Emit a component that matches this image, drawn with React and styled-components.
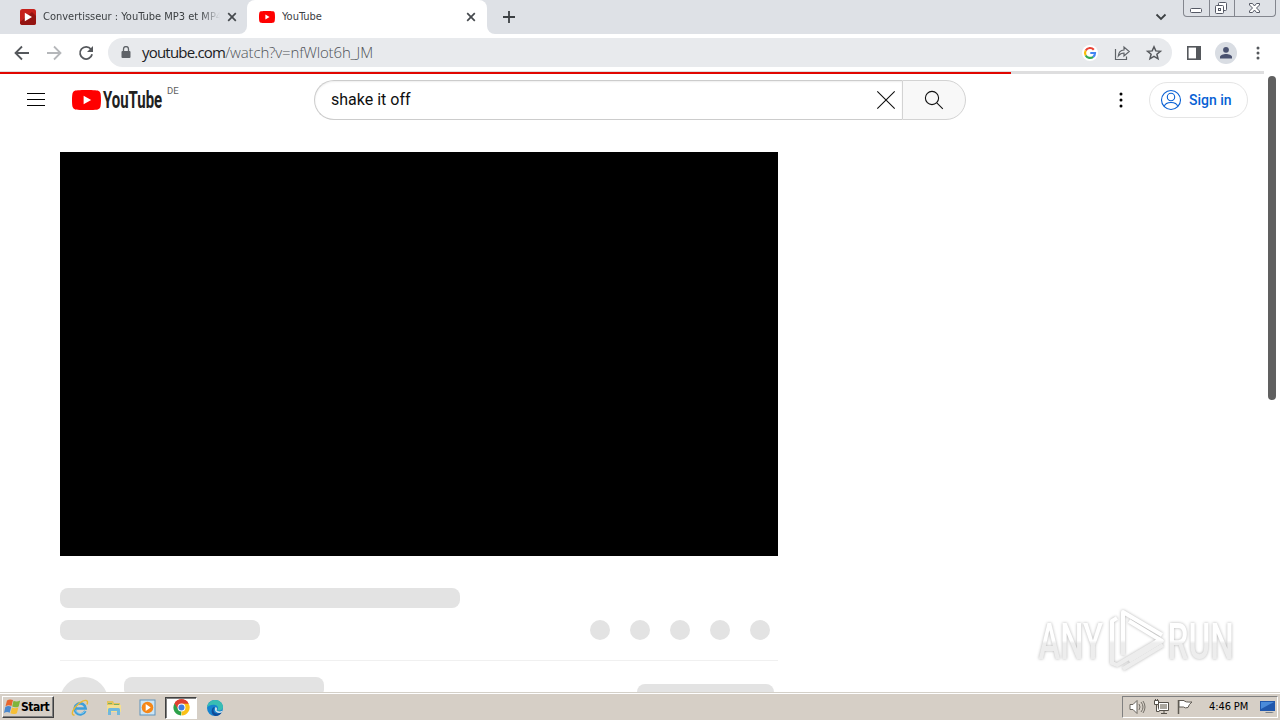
import React from 'react';
import styled, { createGlobalStyle } from 'styled-components';

const GlobalStyle = createGlobalStyle`
  * {
    box-sizing: border-box;
  }

  body {
    margin: 0;
    overflow: hidden;
    background: #fff;
  }

  svg {
    display: block;
    flex: none;
  }
`;

const Screen = styled.div`
  position: relative;
  display: flex;
  flex-direction: column;
  width: 1280px;
  height: 720px;
  overflow: hidden;
  font-family: Roboto, 'Liberation Sans', sans-serif;
`;

/* ---------- browser ---------- */

const TabStrip = styled.div`
  display: flex;
  height: 34px;
  background: #dee1e6;
`;

const Tab = styled.div`
  display: flex;
  align-items: center;
  width: ${({ $width }) => $width}px;
  height: 34px;
  padding: 0 ${({ $active }) => ($active ? 11 : 10)}px 0 ${({ $left }) => $left}px;
  background: ${({ $active }) => ($active ? '#fff' : '#dee1e6')};
  border-radius: ${({ $active }) => ($active ? '8px 8px 0 0' : '0')};
`;

const TabCorner = styled.div`
  width: ${({ $width }) => $width}px;
  background: linear-gradient(#dee1e6 50%, #fff 50%);

  > div {
    height: 34px;
    background: #dee1e6;
    border-radius: ${({ $radius }) => $radius};
  }
`;

const TabTitle = styled.span`
  flex: 1;
  height: 16px;
  margin-left: 7px;
  overflow: hidden;
  white-space: nowrap;
  font: 11px/16px 'DejaVu Sans Condensed', 'DejaVu Sans', sans-serif;
  font-stretch: condensed;
  color: #3c4043;
  mask-image: ${({ $fade }) => ($fade ? 'linear-gradient(90deg, #000 158px, transparent 177px)' : 'none')};
`;

const NewTab = styled.div`
  display: flex;
  align-items: center;
  padding-left: 8px;
`;

const WindowControls = styled.div`
  display: flex;
  align-items: flex-start;
  margin-left: auto;

  .chevron {
    margin: 13px 16px 0 0;
  }
`;

const WindowButtons = styled.div`
  display: flex;
  width: 93px;
  height: 17px;
  margin-right: 4px;
  border: 1px solid #83868e;
  border-top: none;
  border-radius: 0 0 4px 4px;
`;

const WindowButton = styled.div`
  display: flex;
  align-items: center;
  justify-content: center;
  width: ${({ $width }) => $width}px;
  height: 16px;

  & + & {
    border-left: 1px solid #83868e;
  }
`;

const Toolbar = styled.div`
  display: flex;
  align-items: center;
  height: 37px;
  padding-left: 14px;
`;

const NavButtons = styled.div`
  display: flex;
  gap: 16px;
  margin-right: 14px;
`;

const Omnibox = styled.div`
  display: flex;
  align-items: center;
  width: 1064px;
  height: 29px;
  padding: 0 9px 0 11px;
  border-radius: 15px;
  background: #e8eaed;
`;

const Url = styled.div`
  flex: 1;
  margin: -1px 0 0 9px;
  font: 300 15px/20px 'Open Sans', 'Noto Sans', sans-serif;
  letter-spacing: -0.4px;
  color: #4f5358;
  white-space: nowrap;

  b {
    font-weight: 400;
    letter-spacing: -0.8px;
    color: #202124;
  }

  span {
    letter-spacing: -0.15px;
  }
`;

const OmniboxIcons = styled.div`
  display: flex;
  align-items: center;
  gap: 14px;
`;

const ToolbarIcons = styled.div`
  display: flex;
  align-items: center;
  gap: 13px;
  margin-left: 14px;
`;

const ProfileBadge = styled.div`
  display: flex;
  width: 22px;
  height: 22px;
  align-items: center;
  justify-content: center;
  border-radius: 50%;
  background: #d9dde3;
`;

const LoadingBar = styled.div`
  width: 1264px;
  height: 3px;
  padding-top: 1px;
  background: #dededf;

  > div {
    width: 1011px;
    height: 2px;
    background: #e10600;
  }
`;

/* ---------- page ---------- */

const Page = styled.main`
  display: flex;
  height: 618px;
  overflow: hidden;
`;

const PageBody = styled.div`
  width: 1264px;
`;

const Scrollbar = styled.div`
  width: 16px;
  padding: 2px 4px;

  > div {
    height: 324px;
    border-radius: 4px;
    background: #606060;
  }
`;

const Masthead = styled.header`
  display: flex;
  align-items: center;
  height: 52px;
  padding: 0 16px 0 24px;
`;

const Logo = styled.div`
  display: flex;
  align-items: center;
  gap: 1px;
  margin-left: 24px;
`;

const Country = styled.span`
  align-self: flex-start;
  width: 14px;
  margin: 11px 0 0 4px;
  font: 9.5px/12px Roboto, sans-serif;
  color: #606060;
`;

const SearchForm = styled.div`
  display: flex;
  width: 652px;
  height: 40px;
  margin-left: 133px;
`;

const SearchField = styled.div`
  display: flex;
  align-items: center;
  justify-content: space-between;
  width: 588px;
  padding: 0 4px 0 16px;
  border: 1px solid #ccc;
  border-right: none;
  border-radius: 20px 0 0 20px;
  box-shadow: inset 0 1px 2px #eee;
  font-size: 16px;
  line-height: 24px;
  color: #0f0f0f;
`;

const SearchButton = styled.div`
  display: flex;
  align-items: center;
  width: 64px;
  padding-left: 19px;
  border: 1px solid #d3d3d3;
  border-radius: 0 20px 20px 0;
  background: #f8f8f8;
`;

const MastheadEnd = styled.div`
  display: flex;
  align-items: center;
  gap: 16px;
  margin-left: auto;
`;

const SignIn = styled.div`
  display: flex;
  align-items: center;
  gap: 6px;
  width: 99px;
  height: 36px;
  padding-left: 9px;
  border: 1px solid #e5e5e5;
  border-radius: 18px;
  font-size: 14px;
  font-weight: 500;
  color: #065fd4;
  white-space: nowrap;
`;

const Watch = styled.section`
  width: 718px;
  margin: 26px 0 0 60px;
`;

const Player = styled.div`
  height: 404px;
  background: #000;
`;

const Bone = styled.div`
  width: ${({ $width }) => $width}px;
  height: ${({ $height }) => $height || 20}px;
  border-radius: ${({ $round }) => ($round ? '50%' : '8px')};
  background: #e3e3e3;
`;

const TitleRow = styled.div`
  margin-top: 32px;
`;

const InfoRow = styled.div`
  display: flex;
  justify-content: space-between;
  height: 41px;
  margin-top: 12px;
  padding-right: 8px;
  border-bottom: 1px solid #f0f0f0;
`;

const Actions = styled.div`
  display: flex;
  gap: 20px;
`;

const OwnerRow = styled.div`
  display: flex;
  align-items: flex-start;
  gap: 16px;
  padding: 16px 4px 0 0;

  .subscribe {
    margin: 7px 0 0 auto;
  }
`;

const Watermark = styled.div`
  position: absolute;
  left: 1030px;
  top: 600px;

  svg {
    overflow: visible;
    filter: drop-shadow(0 0 1.5px #b4b4b4);
  }
`;

/* ---------- taskbar ---------- */

const Taskbar = styled.footer`
  display: flex;
  align-items: flex-start;
  height: 28px;
  padding: 2px 2px 0;
  border-top: 1px solid #d4d0c8;
  box-shadow: inset 0 1px 0 #fff;
  background: #d6cfc6;
`;

const StartButton = styled.div`
  display: flex;
  align-items: center;
  width: 52px;
  height: 22px;
  margin-top: 1px;
  padding-left: 1px;
  border: 1px solid;
  border-color: #fff #404040 #404040 #fff;
  box-shadow: inset -1px -1px 0 #808080;
  font: bold 12px/16px 'DejaVu Sans Condensed', 'DejaVu Sans', sans-serif;
  font-stretch: condensed;
  letter-spacing: -0.5px;
  color: #000;
`;

const QuickLaunch = styled.div`
  display: flex;
  align-items: center;
  height: 23px;
  margin: 1px 0 0 9px;
`;

const LaunchItem = styled.div`
  display: flex;
  align-items: center;
  justify-content: center;
  width: ${({ $width }) => $width}px;
  height: 22px;
  border: 1px solid ${({ $pressed }) => ($pressed ? '#fff' : 'transparent')};
  border-top-color: ${({ $pressed }) => ($pressed ? '#404040' : 'transparent')};
  border-left-color: ${({ $pressed }) => ($pressed ? '#404040' : 'transparent')};
  box-shadow: ${({ $pressed }) => ($pressed ? 'inset 1px 1px 0 #808080' : 'none')};
  background: ${({ $pressed }) => ($pressed ? '#fff' : 'none')};
`;

const Tray = styled.div`
  display: flex;
  align-items: center;
  width: 156px;
  height: 22px;
  margin: 1px 0 0 auto;
  padding-left: 6px;
  border: 1px solid;
  border-color: #808080 #fff #fff #808080;
`;

const TrayIcons = styled.div`
  display: flex;
  gap: 7px;
`;

const Clock = styled.span`
  width: 42px;
  margin: 0 9px 0 15px;
  font: 11px/14px 'DejaVu Sans Condensed', 'DejaVu Sans', sans-serif;
  font-stretch: condensed;
  letter-spacing: -0.1px;
  white-space: nowrap;
  color: #000;
`;

/* ---------- icons ---------- */

const CloseIcon = () => (
  <svg width="10" height="10" viewBox="0 0 10 10" stroke="#45494d" strokeWidth="1.7">
    <path d="M1.2 1.2l7.6 7.6M8.8 1.2L1.2 8.8" />
  </svg>
);

const ConverterIcon = () => (
  <svg width="16" height="16" viewBox="0 0 16 16">
    <rect width="16" height="16" rx="2.5" fill="#c5201b" />
    <path d="M0 13L12 3l4 4v6.5a2.5 2.5 0 0 1-2.5 2.5h-11A2.5 2.5 0 0 1 0 13z" fill="#941411" />
    <path d="M4.8 3.8v8.4L12 8z" fill="#fff" />
  </svg>
);

const YouTubeMark = ({ width, height }) => (
  <svg width={width} height={height} viewBox="0 0 28 20" preserveAspectRatio="none">
    <path
      d="M27.4 3.1A3.5 3.5 0 0 0 24.9.6C22.7 0 14 0 14 0S5.3 0 3.1.6A3.5 3.5 0 0 0 .6 3.1C0 5.3 0 10 0 10s0 4.7.6 6.9a3.5 3.5 0 0 0 2.5 2.5C5.3 20 14 20 14 20s8.7 0 10.9-.6a3.5 3.5 0 0 0 2.5-2.5C28 14.7 28 10 28 10s0-4.7-.6-6.9z"
      fill="red"
    />
    <path d="M11.2 5.8v8.4l7.3-4.2z" fill="#fff" />
  </svg>
);

const Wordmark = () => (
  <svg width="61" height="28" viewBox="0 0 61 28">
    <text
      transform="translate(1 22) scale(.65 1)"
      textLength="91"
      lengthAdjust="spacingAndGlyphs"
      fontFamily="Roboto, sans-serif"
      fontSize="23.5"
      fontWeight="700"
      fill="#212121"
    >
      YouTube
    </text>
  </svg>
);

const ArrowIcon = ({ color = '#55585c', flip }) => (
  <svg width="16" height="16" viewBox="0 0 16 16" fill="none" stroke={color} strokeWidth="1.8">
    <path d={flip ? 'M1 8h13M8 1.5L14.5 8 8 14.5' : 'M15 8H2M8 1.5L1.5 8 8 14.5'} />
  </svg>
);

const ReloadIcon = () => (
  <svg width="16" height="16" viewBox="0 0 16 16">
    <path d="M13 4.2A6.1 6.1 0 1 0 14.1 9.3" fill="none" stroke="#55585c" strokeWidth="1.8" />
    <path d="M15 1v6H9z" fill="#55585c" />
  </svg>
);

const LockIcon = () => (
  <svg width="14" height="14" viewBox="0 0 14 14">
    <rect x="2.5" y="5" width="9" height="7" rx="1" fill="#5f6368" />
    <path d="M4.5 6V3a2.5 2.5 0 0 1 5 0V6" fill="none" stroke="#5f6368" strokeWidth="1.3" />
  </svg>
);

const GoogleIcon = () => (
  <svg width="18" height="18" viewBox="0 0 18 18">
    <circle cx="9" cy="9" r="8" fill="#fff" />
    <g fill="none" strokeWidth="2.2">
      <path d="M12.8 5.7A5 5 0 0 0 4.7 6.5" stroke="#ea4335" />
      <path d="M4.7 6.5a5 5 0 0 0 0 5" stroke="#fbbc05" />
      <path d="M4.7 11.5a5 5 0 0 0 7.5 1.3" stroke="#34a853" />
      <path d="M12.2 12.8A5 5 0 0 0 14 9H9.3" stroke="#4285f4" />
    </g>
  </svg>
);

const ShareIcon = () => (
  <svg width="18" height="18" viewBox="0 0 18 18" fill="none" stroke="#5f6368" strokeWidth="1.2">
    <path d="M2.5 5v10.5h11v-3" />
    <path d="M5.3 12C5.6 8.5 7.5 6.2 11 6V3l5.2 4.5L11 12V9C8.5 9 6.8 10 5.3 12z" />
  </svg>
);

const StarIcon = () => (
  <svg width="18" height="18" viewBox="0 0 18 18" fill="none" stroke="#55585c" strokeWidth="1.5">
    <path d="M9 2.8l1.8 4.1 4.6.4-3.5 3 1.1 4.5L9 12.4l-4 2.4 1.1-4.5-3.5-3 4.6-.4z" />
  </svg>
);

const PanelIcon = () => (
  <svg width="16" height="16" viewBox="0 0 16 16">
    <rect x="1.8" y="1.8" width="12.4" height="12.4" fill="#fff" stroke="#55585c" strokeWidth="1.6" />
    <path d="M10 1.5h5v13h-5z" fill="#55585c" />
  </svg>
);

const DotsIcon = ({ color, r = 1.5, step = 5, width = 16 }) => (
  <svg width={width} height="24" viewBox="-8 -12 16 24" fill={color}>
    <circle cy={-step} r={r} />
    <circle r={r} />
    <circle cy={step} r={r} />
  </svg>
);

const MenuIcon = () => (
  <svg width="24" height="24" viewBox="0 0 24 24" stroke="#030303">
    <path d="M3 5.5h18M3 11.5h18M3 17.5h18" />
  </svg>
);

const ClearIcon = () => (
  <svg width="24" height="24" viewBox="0 0 24 24" stroke="#111" strokeWidth="1.1">
    <path d="M3.3 3.3l17.4 17.4M20.7 3.3L3.3 20.7" />
  </svg>
);

const SearchIcon = () => (
  <svg width="24" height="24" viewBox="0 0 24 24" fill="none" stroke="#111" strokeWidth="1.1">
    <circle cx="10" cy="10" r="6.6" />
    <path d="M14.8 14.8l6 6" />
  </svg>
);

const AccountIcon = () => (
  <svg width="24" height="24" viewBox="0 0 24 24" fill="none" stroke="#065fd4" strokeWidth="1.1">
    <circle cx="12" cy="12" r="9.5" />
    <circle cx="12" cy="9" r="3.7" />
    <path d="M5.2 18.6C6 15.8 8.6 14.5 12 14.5s6 1.3 6.8 4.1" />
  </svg>
);

const AnyRunLogo = () => (
  <svg width="210" height="80" viewBox="0 0 210 80">
    <defs>
      <linearGradient id="fade" gradientUnits="userSpaceOnUse" x1="0" y1="40" x2="0" y2="43">
        <stop offset="0" stopColor="#fff" />
        <stop offset="1" stopColor="#ededed" />
      </linearGradient>
      <linearGradient id="letterFade" gradientUnits="userSpaceOnUse" x1="0" y1="-18" x2="0" y2="-15">
        <stop offset="0" stopColor="#fff" />
        <stop offset="1" stopColor="#ededed" />
      </linearGradient>
    </defs>
    <g fill="url(#letterFade)" fontFamily="Roboto, sans-serif" fontSize="50" fontWeight="500">
      <text transform="translate(8.5 58.5) scale(.65 1)" textLength="99" lengthAdjust="spacingAndGlyphs">
        ANY
      </text>
      <text transform="translate(137.5 58.5) scale(.65 1)" textLength="102" lengthAdjust="spacingAndGlyphs">
        RUN
      </text>
    </g>
    <g fill="none" stroke="url(#fade)" strokeWidth="4" strokeLinejoin="round">
      <path d="M93 55V12l39 23M99 21l33 20L99 61" />
      <path d="M87 18l-5 3v42l5 2 44-26M93 69l40-24" />
    </g>
  </svg>
);

const WindowsFlag = () => (
  <svg width="17" height="16" viewBox="0 0 17 16">
    <path d="M3 1.5c2-1.500 4-1.300 6-.4L7.500 7C5.500 6 3.600 6.100 1.500 7.200z" fill="#e7652d" />
    <path d="M9.5 1.7c2 1 4 1 6.7-.2L14.7 7.4c-2.2 1.200-4.500 1.200-6.500.1z" fill="#7fb53c" />
    <path d="M1.3 8c2-1.200 4-1.200 6-.3L5.7 13.8C4 12.8 2 12.9 0 13.9z" fill="#4a88ce" />
    <path d="M8 8.4c2 1 4 1 6.4-.1l-1.5 5.9c-2.2 1.200-4.500 1.200-6.500.1z" fill="#f6bf36" />
  </svg>
);

const ExplorerIcon = () => (
  <svg width="18" height="18" viewBox="0 0 18 18" fill="none">
    <path d="M14.3 12A5.5 5.5 0 1 1 14.7 9.5H4.5" stroke="#3e9fda" strokeWidth="2.6" />
    <path d="M13.8 12.3A5.5 5.5 0 0 1 4.5 11.5" stroke="#8bd0f3" strokeWidth="1" />
    <path d="M3.5 16.3C-1 16 2 9 8 4.5s10-4 8 1" stroke="#e9b932" strokeWidth="1.4" />
  </svg>
);

const FolderIcon = () => (
  <svg width="18" height="18" viewBox="0 0 18 18">
    <path d="M2 2h6l1 2h6v9H2z" fill="#e4c45d" />
    <path d="M3 4h4v1H3zM9 5h5v2H9z" fill="#7ab05f" />
    <path d="M2 6h14v7H2z" fill="#f4df91" />
    <path d="M3 16V10.5Q3 9 4.5 9h9Q15 9 15 10.5V16h-3v-4H6v4z" fill="#70b8dc" />
  </svg>
);

const MediaPlayerIcon = () => (
  <svg width="17" height="17" viewBox="0 0 17 17">
    <rect x="1" y="1" width="15" height="15" fill="#cce5f5" stroke="#5e93bc" />
    <circle cx="8.5" cy="8.5" r="5.8" fill="#f58718" />
    <path d="M6.7 5v7l5-3.5z" fill="#fff" />
  </svg>
);

const ChromeIcon = () => (
  <svg width="17" height="17" viewBox="0 0 18 18">
    <path d="M9 9L1.6 4.7A8.5 8.5 0 0 1 16.4 4.7z" fill="#df4030" />
    <path d="M9 9V.5L16.4 4.7A8.5 8.5 0 0 1 9 17.5z" fill="#fbc116" />
    <path d="M9 9l-.5 8.5A8.5 8.5 0 0 1 1.6 4.7z" fill="#2da14a" />
    <path d="M9 5h7.5l-.1-.3A8.5 8.5 0 0 0 1.6 4.7L5.5 11z" fill="#df4030" />
    <circle cx="9" cy="9" r="4.2" fill="#fff" />
    <circle cx="9" cy="9" r="3.2" fill="#3f7de0" />
  </svg>
);

const EdgeIcon = () => (
  <svg width="18" height="18" viewBox="0 0 18 18">
    <circle cx="9" cy="9" r="8" fill="#1683cf" />
    <path d="M1 8.5C2 3 5.5 1 9 1c5 0 8 3.5 8 7 0 3-3 4-6 3.5 2-2 1-5-2-5.500-3.500-.6-6 .5-8 2.500z" fill="#38bdb3" />
    <path d="M9 8c-3 3-1 7 3 6.5 2 0 3-.5 4-1.2A8 8 0 0 1 9.5 17C5.5 16 4.5 11.5 7 8.5z" fill="#104b98" />
    <path d="M9.5 8c1.5.3 2 2 1 3.200 1.200 1.300 3.500 1.600 5.800.6l-.4 1.500c-3 1.400-6.500.2-6.900-2.300-.2-1 .2-2 .5-3z" fill="#d6e4ec" />
  </svg>
);

const SpeakerIcon = () => (
  <svg width="17" height="16" viewBox="0 0 17 16" fill="none" stroke="#69645d">
    <path d="M1 5.5h3l4-4v13l-4-4H1z" fill="#fff" />
    <path d="M10 5q2 3 0 6M12 3q4 5 0 10M14 2q4 6 0 12" strokeWidth=".9" />
  </svg>
);

const NetworkIcon = () => (
  <svg width="17" height="16" viewBox="0 0 17 16" fill="none" stroke="#555049">
    <path d="M5.5 3.5h10v8h-10zM8 14.5h6M11 11.5v3" fill="#fff" />
    <path d="M7 5h7v5H7z" fill="#aaa69e" stroke="none" />
    <path d="M1.5 1.5h4v4h-4zM2.5 0v2M4.5 0v2M3.5 5.5v7h3" fill="#fff" />
  </svg>
);

const FlagIcon = () => (
  <svg width="17" height="16" viewBox="0 0 17 16" stroke="#5f5a53">
    <path d="M1.5 1v14" strokeWidth="1.5" />
    <path d="M2 1.5h5q1 2 8 1.5-3 2-4 5.5-3 1-4.5-.5H2z" fill="#fff" />
  </svg>
);

const DesktopIcon = () => (
  <svg width="16" height="16" viewBox="0 0 16 16">
    <path d="M0 2h15v10H0z" fill="#2058ad" />
    <path d="M1 3h13L1 10z" fill="#4a8bda" />
    <path d="M5 13h7l2 1H6z" fill="#78818b" />
  </svg>
);

const App = () => (
  <>
    <GlobalStyle />
    <Screen>
      <TabStrip>
        <TabCorner $width={247} $radius="0 0 8px 0">
          <Tab $width={247} $left={20}>
            <ConverterIcon />
            <TabTitle $fade>Convertisseur : YouTube MP3 et MP4</TabTitle>
            <CloseIcon />
          </Tab>
        </TabCorner>
        <Tab $active $width={240} $left={12}>
          <YouTubeMark width={16} height={12} />
          <TabTitle>YouTube</TabTitle>
          <CloseIcon />
        </Tab>
        <TabCorner $width={8} $radius="0 0 0 8px">
          <div />
        </TabCorner>
        <NewTab>
          <svg width="12" height="12" viewBox="0 0 12 12" stroke="#3c4043" strokeWidth="1.8">
            <path d="M6 0v12M0 6h12" />
          </svg>
        </NewTab>
        <WindowControls>
          <svg className="chevron" width="12" height="8" viewBox="0 0 12 8" fill="none" stroke="#3c4043" strokeWidth="1.8">
            <path d="M1.5 1.5L6 6l4.5-4.5" />
          </svg>
          <WindowButtons>
            <WindowButton $width={25}>
              <svg width="13" height="16" viewBox="0 0 13 16">
                <rect x=".5" y="8.5" width="11" height="4" rx="1" fill="#fff" stroke="#555965" />
              </svg>
            </WindowButton>
            <WindowButton $width={25}>
              <svg width="16" height="16" viewBox="0 0 16 16" fill="#fff" stroke="#555965">
                <rect x="4.5" y="2.5" width="8" height="8" rx="1" />
                <rect x="1.5" y="5.5" width="8" height="8" rx="1" />
                <rect x="4.5" y="8.5" width="2" height="2" />
              </svg>
            </WindowButton>
            <WindowButton $width={41}>
              <svg width="15" height="16" viewBox="0 0 15 16" fill="#fff" stroke="#555965">
                <path d="M1.5 3.5h3l2 2.5 2-2.5h3v1.5l-3 3 3 3v1.5h-3l-2-2.5-2 2.5h-3V11l3-3-3-3z" />
              </svg>
            </WindowButton>
          </WindowButtons>
        </WindowControls>
      </TabStrip>

      <Toolbar>
        <NavButtons>
          <ArrowIcon />
          <ArrowIcon flip color="#b5b7ba" />
          <ReloadIcon />
        </NavButtons>
        <Omnibox>
          <LockIcon />
          <Url>
            <b>youtube.com</b>
            <span>/watch?v=nfWlot6h_JM</span>
          </Url>
          <OmniboxIcons>
            <GoogleIcon />
            <ShareIcon />
            <StarIcon />
          </OmniboxIcons>
        </Omnibox>
        <ToolbarIcons>
          <PanelIcon />
          <ProfileBadge>
            <svg width="14" height="14" viewBox="0 0 14 14" fill="#4a5270">
              <circle cx="7" cy="3.8" r="2.9" />
              <path d="M1 12.5v-1.5C1 9 4.5 8 7 8s6 1 6 3v1.5z" />
            </svg>
          </ProfileBadge>
          <DotsIcon color="#55585c" />
        </ToolbarIcons>
      </Toolbar>
      <LoadingBar>
        <div />
      </LoadingBar>

      <Page>
        <PageBody>
          <Masthead>
            <MenuIcon />
            <Logo>
              <YouTubeMark width={29} height={20} />
              <Wordmark />
            </Logo>
            <Country>DE</Country>
            <SearchForm>
              <SearchField>
                shake it off
                <ClearIcon />
              </SearchField>
              <SearchButton>
                <SearchIcon />
              </SearchButton>
            </SearchForm>
            <MastheadEnd>
              <DotsIcon color="#030303" step={6} width={24} />
              <SignIn>
                <AccountIcon />
                Sign in
              </SignIn>
            </MastheadEnd>
          </Masthead>

          <Watch>
            <Player />
            <TitleRow>
              <Bone $width={400} />
            </TitleRow>
            <InfoRow>
              <Bone $width={200} />
              <Actions>
                {[0, 1, 2, 3, 4].map((key) => (
                  <Bone key={key} $round $width={20} />
                ))}
              </Actions>
            </InfoRow>
            <OwnerRow>
              <Bone $round $width={48} $height={48} />
              <Bone $width={200} />
              <Bone className="subscribe" $width={137} $height={36} />
            </OwnerRow>
          </Watch>
        </PageBody>
        <Scrollbar>
          <div />
        </Scrollbar>
      </Page>

      <Taskbar>
        <StartButton>
          <WindowsFlag />
          Start
        </StartButton>
        <QuickLaunch>
          <LaunchItem $width={34}><ExplorerIcon /></LaunchItem>
          <LaunchItem $width={33}><FolderIcon /></LaunchItem>
          <LaunchItem $width={35}><MediaPlayerIcon /></LaunchItem>
          <LaunchItem $width={32} $pressed><ChromeIcon /></LaunchItem>
          <LaunchItem $width={36}><EdgeIcon /></LaunchItem>
        </QuickLaunch>
        <Tray>
          <TrayIcons>
            <SpeakerIcon />
            <NetworkIcon />
            <FlagIcon />
          </TrayIcons>
          <Clock>4:46 PM</Clock>
          <DesktopIcon />
        </Tray>
      </Taskbar>

      <Watermark>
        <AnyRunLogo />
      </Watermark>
    </Screen>
  </>
);

export default App;
